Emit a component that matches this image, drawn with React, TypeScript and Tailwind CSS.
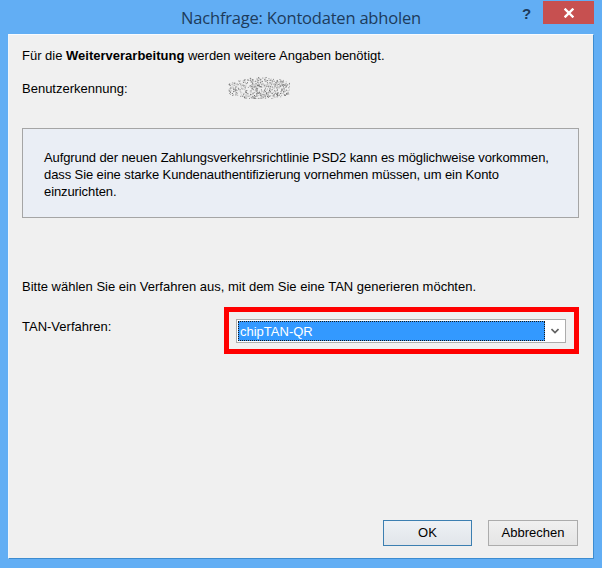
import React from "react";

function Scribble() {
  const dots: React.ReactElement[] = [];
  let s = 12345;
  const rnd = () => {
    s = (s * 1103515245 + 12345) % 2147483648;
    return s / 2147483648;
  };
  for (let i = 0; i < 700; i++) {
    const x = rnd() * 62;
    const y = rnd() * 22;
    const cx = (x - 31) / 31;
    const cy = (y - 11) / 11;
    if (cx * cx + cy * cy * 1.2 > 1 + rnd() * 0.3) continue;
    const g = Math.floor(90 + rnd() * 130);
    dots.push(
      <rect key={i} x={x} y={y} width={1} height={1} fill={`rgb(${g},${g},${g})`} />
    );
  }
  return (
    <svg width="62" height="22" viewBox="0 0 62 22">
      {dots}
    </svg>
  );
}

export default function App() {
  return (
    <div className="w-[602px] h-[568px] bg-[#62aef4] flex flex-col overflow-hidden">
      {/* Title bar */}
      <div className="h-[34px] flex items-start relative">
        <div className="flex-1 flex justify-center pt-[6px]">
          <span className="text-[16.5px] text-[#1d3b5b] font-['Open_Sans',sans-serif] leading-[24px] tracking-[-0.2px]">
            Nachfrage: Kontodaten abholen
          </span>
        </div>
        <span className="absolute left-[522px] top-[3px] text-[15px] font-bold text-[#1d3b5b] font-['Liberation_Sans',sans-serif]">
          ?
        </span>
        <div className="absolute left-[543px] top-[1px] w-[51px] h-[23px] bg-[#c75050] flex items-center justify-center">
          <svg width="10" height="10" viewBox="0 0 10 10">
            <path d="M1.5 1.5 L8.5 8.5 M8.5 1.5 L1.5 8.5" stroke="#ffffff" strokeWidth="2.4" strokeLinecap="square" />
          </svg>
        </div>
      </div>

      {/* Content */}
      <div className="mx-[8px] mb-[9px] flex-1 bg-[#f0f0f0] border border-t-[#f8fbfe] border-l-[#f0f6fc] border-r-[#3d8cd0] border-b-[#3d8cd0] flex flex-col pl-[13px] pr-[14px] font-['Liberation_Sans',Arial,sans-serif] text-[13px] text-black">
        <div className="mt-[13px] h-[15px] leading-[15px]">
          Für die <b>Weiterverarbeitung</b> werden weitere Angaben benötigt.
        </div>
        <div className="mt-[18px] h-[15px] leading-[15px] flex items-center relative">
          <span className="w-[206px]">Benutzerkennung:</span>
          <div className="-mt-[1px]">
            <Scribble />
          </div>
        </div>
        <div className="mt-[32px] h-[90px] bg-[#eaeef5] border border-[#a5a5a5] pl-[21px] pt-[20px] leading-[17px] tracking-[-0.1px]">
          Aufgrund der neuen Zahlungsverkehrsrichtlinie PSD2 kann es möglichweise vorkommen,
          <br />
          dass Sie eine starke Kundenauthentifizierung vornehmen müssen, um ein Konto
          <br />
          einzurichten.
        </div>
        <div className="mt-[61px] h-[15px] leading-[15px]">
          Bitte wählen Sie ein Verfahren aus, mit dem Sie eine TAN generieren möchten.
        </div>
        <div className="mt-[13px] flex items-start">
          <span className="w-[202px] mt-[12px] leading-[15px]">TAN-Verfahren:</span>
          <div className="w-[355px] h-[47px] border-[5px] border-[#ff0000] pl-[7px] pr-[8px] pt-[7px]">
            <div className="h-[24px] bg-white border border-[#acacac] flex items-center pl-[1px]">
              <div className="flex-1 h-[20px] bg-[#3399ff] border border-dotted border-[#1a1a1a] flex items-center pl-[1px] text-white text-[13px] leading-none">
                chipTAN-QR
              </div>
              <div className="w-[20px] flex items-center justify-center">
                <svg width="8" height="6" viewBox="0 0 8 6">
                  <path d="M0.5 1 L4 4.5 L7.5 1" stroke="#606060" strokeWidth="1.6" fill="none" />
                </svg>
              </div>
            </div>
          </div>
        </div>
        <div className="flex-1" />
        <div className="flex justify-end gap-[16px] mb-[12px] pr-[1px]">
          <button className="w-[89px] h-[26px] border border-[#3c7fb1] bg-gradient-to-b from-[#eef1f5] to-[#e1e5ea] text-[13px] text-black">
            OK
          </button>
          <button className="w-[90px] h-[26px] border border-[#acacac] bg-gradient-to-b from-[#f0f0f0] to-[#e5e5e5] text-[13px] text-black">
            Abbrechen
          </button>
        </div>
      </div>
    </div>
  );
}
